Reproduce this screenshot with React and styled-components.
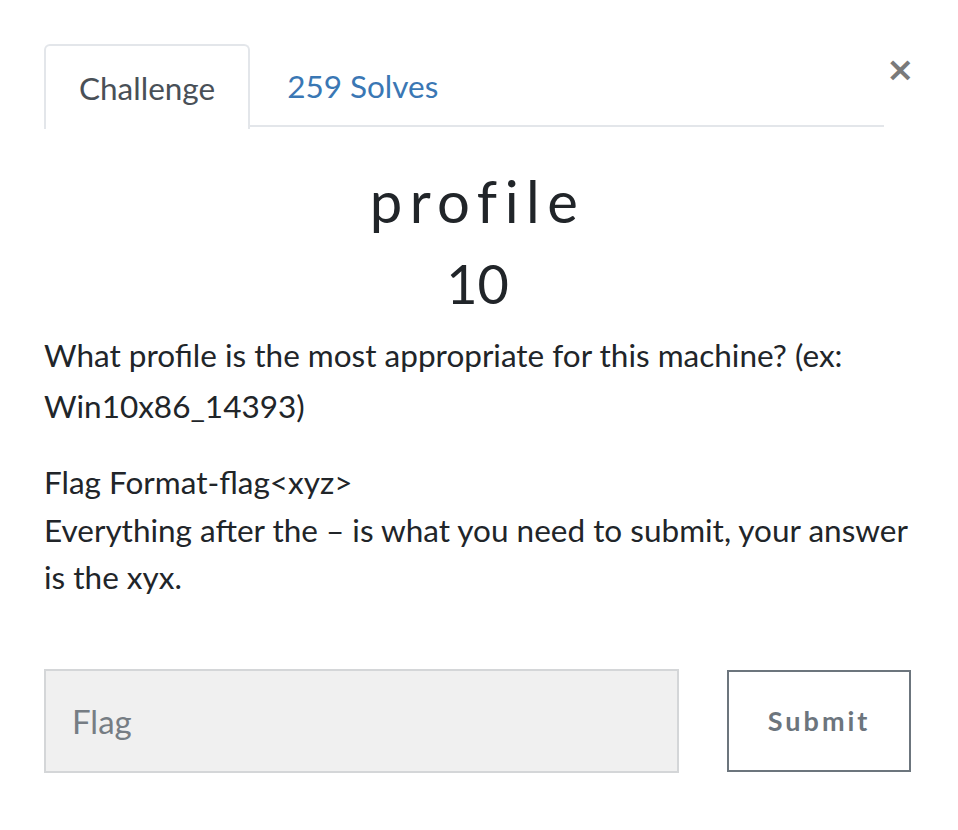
import styled, { createGlobalStyle } from "styled-components";

const GlobalStyle = createGlobalStyle`
  body {
    margin: 0;
    background: #fff;
    font-family: Lato, "Noto Sans", sans-serif;
    color: #212529;
  }
`

const Container = styled.div`
  width: 867px;
  padding: 44px 0 0 44px;
`

const Header = styled.div`
  display: flex;
  align-items: flex-start;
`

const Tabs = styled.div`
  flex: 1;
  display: flex;
  border-bottom: 2px solid #e3e6ea;
  height: 83px;
  box-sizing: border-box;
`

const Tab = styled.div`
  display: flex;
  align-items: center;
  padding: 0 ${(props) => (props.active ? "33px" : "35px")};
  font-size: 31.5px;
  height: ${(props) => (props.active ? "85px" : "81px")};
  box-sizing: border-box;
  color: ${(props) => (props.active ? "#495057" : "#3a77b4")};
  background: #fff;
  border: 2px solid ${(props) => (props.active ? "#e3e6ea" : "transparent")};
  border-bottom: none;
  border-radius: 6px 6px 0 0;
  margin-bottom: ${(props) => (props.active ? "-2px" : "0")};
`

const Close = styled.button`
  width: 27px;
  margin: 8px 0 0;
  padding: 0 0 0 2px;
  border: none;
  background: none;
  font-family: "DejaVu Sans", sans-serif;
  font-weight: bold;
  font-size: 34px;
  line-height: 1;
  color: #7a7a7a;
  cursor: pointer;
`

const Title = styled.h2`
  margin: 40px 0 0;
  text-align: center;
  font-weight: 400;
  font-size: 58px;
  letter-spacing: 7.5px;
  line-height: 68px;
`

const Value = styled.h3`
  margin: 17px 0 0;
  text-align: center;
  font-weight: 400;
  font-size: 54px;
  line-height: 64px;
`

const Description = styled.div`
  margin-top: 14px;
  font-size: 31.5px;
`

const Para = styled.p`
  margin: 0 0 ${(props) => props.gap || "27px"};
  line-height: ${(props) => props.lh || "47.5px"};
`

const Form = styled.div`
  display: flex;
  align-items: center;
  gap: 48px;
  margin-top: 67px;
`

const Input = styled.input`
  width: 636px;
  height: 104px;
  box-sizing: border-box;
  background: #f0f0f0;
  border: 2px solid #d4d6d8;
  padding: 0 26px;
  font-family: Lato, sans-serif;
  font-size: 33px;
  color: #495057;
  outline: none;

  &::placeholder {
    color: #767d84;
  }
`

const Submit = styled.button`
  width: 184px;
  height: 102px;
  box-sizing: border-box;
  background: #fff;
  border: 2px solid #6c757d;
  font-family: Lato, sans-serif;
  font-weight: 700;
  font-size: 27px;
  letter-spacing: 3px;
  color: #6c757d;
  cursor: pointer;
`

const App = () => {
  return (
    <Container>
      <GlobalStyle />
      <Header>
        <Tabs>
          <Tab active>Challenge</Tab>
          <Tab>259 Solves</Tab>
        </Tabs>
        <Close>×</Close>
      </Header>
      <Title>profile</Title>
      <Value>10</Value>
      <Description>
        <Para lh="51px" gap="27px">
          What profile is the most appropriate for this machine? (ex: Win10x86_14393)
        </Para>
        <Para>
          Flag Format-flag&lt;xyz&gt;
          <br />
          Everything after the – is what you need to submit, your answer is the xyx.
        </Para>
      </Description>
      <Form>
        <Input placeholder="Flag" />
        <Submit>Submit</Submit>
      </Form>
    </Container>
  )
}

export default App
